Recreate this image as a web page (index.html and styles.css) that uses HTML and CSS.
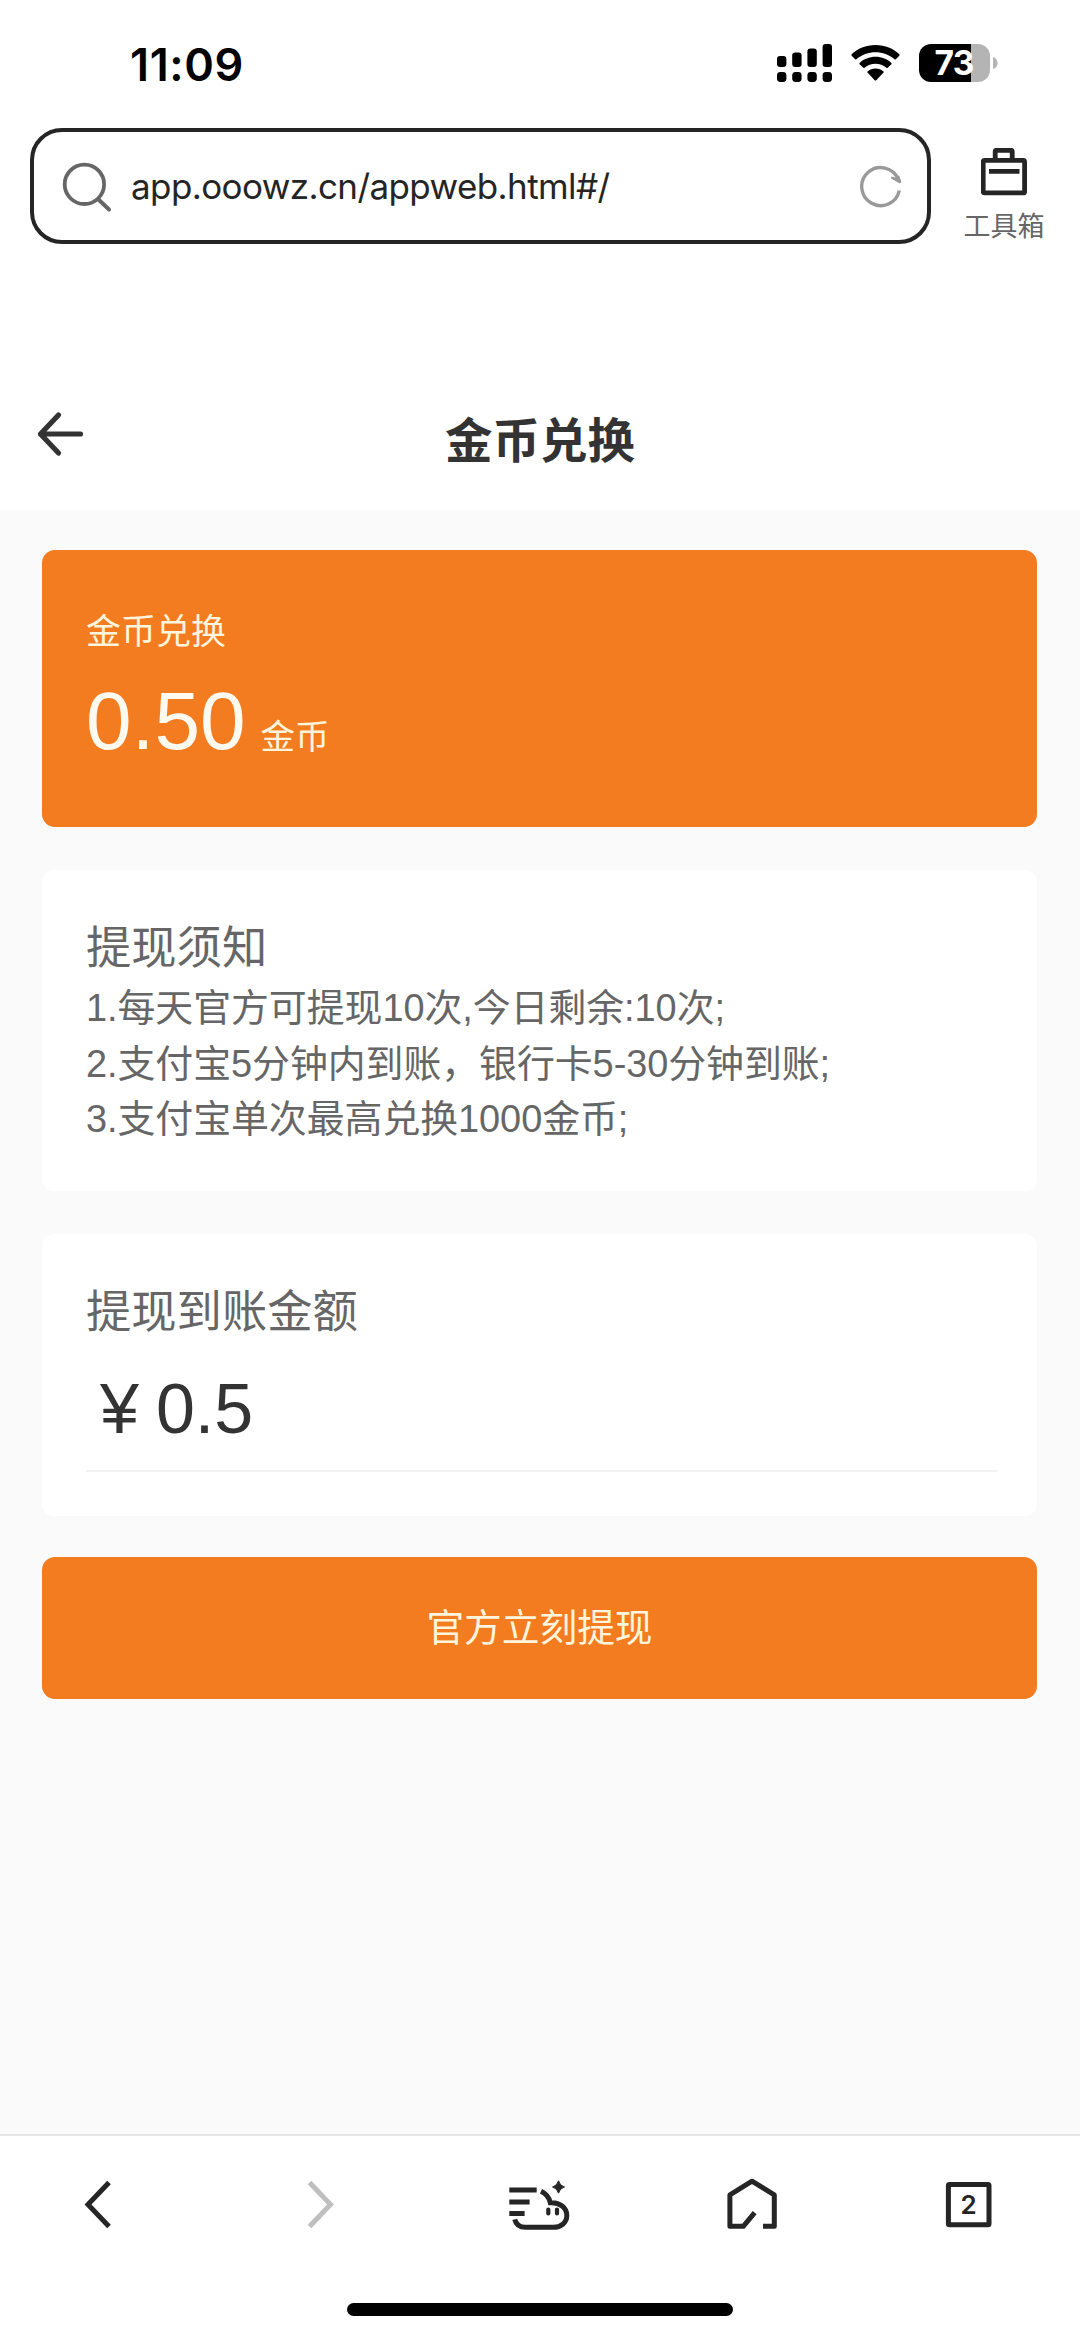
FILE: index.html
```html
<!DOCTYPE html>
<html lang="zh-CN">
<head>
<meta charset="utf-8">
<title>金币兑换</title>
<link rel="stylesheet" href="styles.css">
</head>
<body>
<div class="screen">
  <header class="status">
    <span class="time">11:09</span>
    <div class="indicators">
      <svg class="signal" width="56" height="38" viewBox="0 0 56 38">
        <rect x="0" y="12" width="9.4" height="11" rx="3"/><rect x="15.2" y="8.6" width="9.4" height="14.4" rx="3"/><rect x="30.4" y="4.5" width="9.4" height="18.5" rx="3"/><rect x="45.6" y="0" width="9.4" height="23" rx="3"/>
        <rect x="0" y="28" width="9.4" height="10" rx="3.4"/><rect x="15.2" y="28" width="9.4" height="10" rx="3.4"/><rect x="30.4" y="28" width="9.4" height="10" rx="3.4"/><rect x="45.6" y="28" width="9.4" height="10" rx="3.4"/>
      </svg>
      <svg class="wifi" width="49" height="38" viewBox="0 0 49 38">
        <path d="M24.5 1C34 1 42.600 4.600 48.300 10.300Q49 11 48.300 11.700L44.800 15.200Q44.200 15.800 43.500 15.200C38 10.500 31.500 8.200 24.500 8.200S11 10.500 5.500 15.200Q4.800 15.800 4.200 15.200L.7 11.700Q0 11 .7 10.300C6.400 4.600 15 1 24.500 1Z"/>
        <path d="M24.500 12.700C30.700 12.700 36.300 15 40.400 18.900Q41 19.500 40.400 20.200L36.700 23.800Q36 24.400 35.400 23.800C32.300 21.200 28.600 19.800 24.500 19.800S16.700 21.200 13.600 23.800Q13 24.400 12.300 23.800L8.600 20.200Q8 19.500 8.600 18.900C12.700 15 18.300 12.700 24.500 12.700Z"/>
        <path d="M24.500 24.400C27.600 24.400 30.400 25.500 32.500 27.400Q33 28 32.500 28.600L25.300 36.200Q24.500 36.900 23.700 36.200L16.500 28.600Q16 28 16.500 27.400C18.600 25.500 21.400 24.400 24.500 24.400Z"/>
      </svg>
      <div class="battery"><div class="cell">73</div><svg width="5" height="12" viewBox="0 0 5 12"><path d="M0 0C6 1.500 6 10.500 0 12Z" fill="#b4b4b4"/></svg></div>
    </div>
  </header>

  <div class="browser">
    <div class="address">
      <svg class="search" width="54" height="54" viewBox="0 0 54 54"><circle cx="24.400" cy="25.300" r="19.700"/><path d="M38.500 40.500L49 50.500" stroke-width="4" stroke-linecap="round"/></svg>
      <span class="url">app.ooowz.cn/appweb.html#/</span>
      <svg class="reload" width="46" height="46" viewBox="0 0 46 46"><path d="M41.300 27.500A19 19 0 1 1 40.200 16.200" fill="none" stroke="#999" stroke-width="3.400"/><path d="M33.200 15.600Q32 13.200 34.800 13.800L39.500 15.300L41 12L43.300 18.500Q43.600 20.800 41.200 20.200Z" fill="#999"/></svg>
    </div>
    <div class="toolbox">
      <svg width="46" height="48" viewBox="0 0 46 48"><rect x="2.200" y="12.400" width="41.400" height="32.500" rx="1.500"/><path d="M14.200 12V3.500Q14.200 2.300 15.400 2.300H30Q31.200 2.300 31.200 3.500V12M8 23.300H38.500"/></svg>
      <span>工具箱</span>
    </div>
  </div>

  <div class="titlebar">
    <svg class="back" width="50" height="46" viewBox="0 0 50 46"><path d="M22.500 4L4.500 23L22.500 42M4.500 23H44.500"/></svg>
    <h1>金币兑换</h1>
  </div>

  <main>
    <section class="balance">
      <div class="label">金币兑换</div>
      <div class="amount"><span class="number">0.50</span><span class="unit">金币</span></div>
    </section>
    <section class="card notice">
      <h2>提现须知</h2>
      <p>1.每天官方可提现10次,今日剩余:10次;</p>
      <p>2.支付宝5分钟内到账，银行卡5-30分钟到账;</p>
      <p>3.支付宝单次最高兑换1000金币;</p>
    </section>
    <section class="card payout">
      <h2>提现到账金额</h2>
      <div class="value"><span>¥</span><span>0.5</span></div>
    </section>
    <button class="submit">官方立刻提现</button>
  </main>

  <footer>
    <nav>
      <svg viewBox="0 0 80 80"><path d="M51 18.500L30 40.500L51 62.500"/></svg>
      <svg class="disabled" viewBox="0 0 80 80"><path d="M33.500 18.500L54.500 40.500L33.500 62.500"/></svg>
      <svg viewBox="0 0 80 80"><path d="M16.300 26H43.700M16.300 38H36.600M16.300 49.500H31.600"/><path d="M48 27.300C53 29.500 56 33 57.300 38.700C67 38 73.800 44 73.800 51.500S67.500 63.300 60.500 63.300H32.500C26.500 63.300 23 60.500 21.700 55.300"/><path class="eyes" d="M55.300 45.500V49.500M64 45.500V49.500"/><path class="spark" d="M65.500 16.800Q66.800 21.700 71.500 23Q66.800 24.300 65.500 29.200Q64.200 24.300 59.500 23Q64.200 21.700 65.500 16.800Z"/></svg>
      <svg viewBox="0 0 80 80"><path stroke-linejoin="round" d="M52 62.300H63.300V30.800L41 17.200L18.900 30.800V62.300H32.300L43.700 48.700"/></svg>
      <svg viewBox="0 0 80 80"><rect x="20.400" y="20.400" width="40.600" height="40.400" rx="1"/><text x="40.500" y="49.800">2</text></svg>
    </nav>
    <div class="home-bar"></div>
  </footer>
</div>
</body>
</html>
```
FILE: styles.css
```css
* { box-sizing: border-box; }
body, h1, h2, p { margin: 0; }
body { background: #fff; font-family: "Liberation Sans", "Noto Sans CJK SC", sans-serif; }
svg { display: block; flex: none; }
.screen { width: 1080px; height: 2336px; display: flex; flex-direction: column; overflow: hidden; }

.status { height: 128px; display: flex; justify-content: space-between; padding: 44px 82px 0 130px; }
.time { font: 600 45px/42px Inter, sans-serif; color: #000; letter-spacing: .6px; }
.indicators { display: flex; height: 38px; }
.wifi { margin-left: 18px; }
.battery { display: flex; align-items: center; gap: 3px; margin-left: 19px; }
.cell { width: 71px; height: 38px; border-radius: 12px; background: linear-gradient(90deg, #000 52px, #b4b4b4 52px); color: #fff; font: 700 33.500px/38px Inter, sans-serif; text-align: center; letter-spacing: -.8px; padding-right: 1px; }

.browser { height: 116px; display: flex; padding-left: 30px; }
.address { width: 901px; height: 116px; border: 4px solid #252525; border-radius: 32px; display: flex; align-items: center; padding: 0 23px 0 26px; }
.search { fill: none; stroke: #666; stroke-width: 3.800; }
.url { flex: 1; margin-left: 17px; font: 400 35px/44px Inter, sans-serif; letter-spacing: -.6px; color: #252525; white-space: nowrap; }
.toolbox { width: 80px; margin: 20px 0 0 33px; display: flex; flex-direction: column; align-items: center; }
.toolbox svg { fill: none; stroke: #252525; stroke-width: 4.800; }
.toolbox span { margin-top: 13px; font-size: 27px; line-height: 36px; color: #666; white-space: nowrap; }

.titlebar { height: 266px; padding: 167px 36px 0; display: grid; grid-template-columns: 50px 1fr 50px; align-items: start; }
.back { fill: none; stroke: #333; stroke-width: 5.200; stroke-linecap: round; stroke-linejoin: round; }
h1 { padding-top: 3px; font-size: 47.500px; line-height: 56px; font-weight: 700; color: #333; text-align: center; }

main { flex: 1; background: #fafafa; padding: 40px 43px 0 42px; display: flex; flex-direction: column; }
.balance { height: 277px; border-radius: 13px; background: #f37b20; color: #fff5dc; padding: 59px 46px 0 44px; }
.label { font-size: 35px; line-height: 46px; }
.amount { display: flex; align-items: baseline; margin-top: 19px; line-height: 94px; }
.number { font-size: 82px; color: #fffaf0; }
.unit { font-size: 34.500px; margin-left: 15px; }
.card { background: #fff; border-radius: 12px; padding: 0 40px 0 44px; }
.card h2 { font-size: 45.300px; line-height: 60px; font-weight: 400; color: #666; }
.notice { height: 321px; margin-top: 43px; padding-top: 49px; }
.notice h2 { margin-bottom: 2px; }
.notice p { font-size: 37.900px; line-height: 55.700px; color: #666; white-space: nowrap; letter-spacing: -.05px; }
.payout { height: 282px; margin-top: 43px; padding-top: 49px; }
.value { height: 129px; display: flex; gap: 17px; padding: 26px 0 0 14px; border-bottom: 2px solid #f2f2f2; font-size: 70px; line-height: 80px; color: #333; }
.submit { flex: none; height: 142px; margin-top: 41px; border: 0; border-radius: 13px; background: #f37b20; color: #fff5dc; font: 400 37.700px/50px "Liberation Sans", "Noto Sans CJK SC", sans-serif; padding: 0; }

footer { height: 202px; border-top: 2px solid #e6e6e6; background: #fff; }
nav { display: flex; justify-content: space-between; padding: 28px 72px 0 58px; }
nav svg { width: 80px; height: 80px; fill: none; stroke: #252525; stroke-width: 5; }
nav .disabled { stroke: #bfbfbf; }
nav .eyes { stroke-width: 4.200; stroke-linecap: round; }
nav .spark { fill: #252525; stroke: #252525; stroke-width: 1; }
nav text { font: 600 26px Inter, sans-serif; text-anchor: middle; fill: #252525; stroke: none; }
.home-bar { width: 386px; height: 13px; border-radius: 7px; background: #000; margin: 59px auto 0; }
```
